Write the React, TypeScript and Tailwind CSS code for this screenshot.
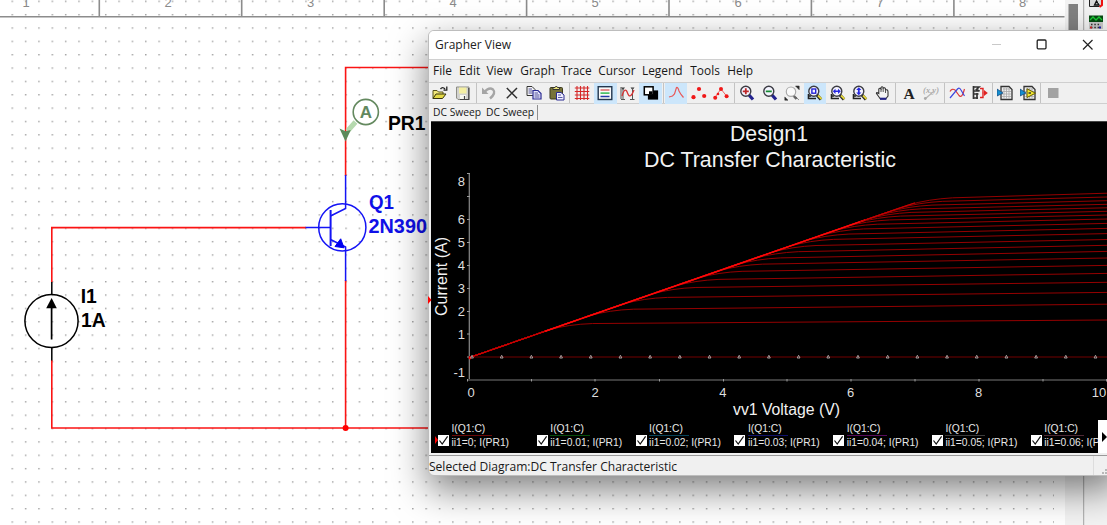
import React from "react";

type Pt = { left: number; right: number };

const CURVES: Pt[] = [
  { left: 321.7, right: 320 }, { left: 306.8, right: 304.2 }, { left: 295.2, right: 292.4 },
  { left: 285.4, right: 282.3 }, { left: 277.2, right: 273.4 }, { left: 269.4, right: 265.4 },
  { left: 262.4, right: 258 }, { left: 256.3, right: 251.4 }, { left: 250.4, right: 245.3 },
  { left: 244.6, right: 239.5 }, { left: 238.8, right: 233.6 }, { left: 233.8, right: 228.4 },
  { left: 229, right: 223.4 }, { left: 224.6, right: 219 }, { left: 220.6, right: 215 },
  { left: 217, right: 211.3 }, { left: 213.6, right: 207.8 }, { left: 210.3, right: 204.3 },
  { left: 206.9, right: 200.7 }, { left: 203.5, right: 197 }, { left: 200.6, right: 193.2 },
];

const envelope = (x: number) => 357.6 - 0.3475 * (x - 469);

function curvePath({ left, right }: Pt) {
  const s = (left - right) / 247;
  const flat = (x: number) => right + s * (1107 - x);
  const xe = (357.6 + 0.3475 * 469 - right - s * 1107) / (0.3475 - s);
  const a = xe - 18;
  const b = xe + 26;
  return `M469 357.6L${a} ${envelope(a)}Q${xe + 2} ${envelope(xe) + 0.6} ${b} ${flat(b)}L1107 ${right}`;
}

function Schematic() {
  return (
    <svg className="absolute inset-0" width="1107" height="525" fontFamily="Liberation Sans, Arial, sans-serif">
      <defs>
        <pattern id="dots" x="11.5" y="0.6" width="13.352" height="13.352" patternUnits="userSpaceOnUse">
          <rect width="1.5" height="1.4" fill="#a2a2a2" />
        </pattern>
      </defs>
      <rect x="11" width="1043" height="525" fill="url(#dots)" />
      <g stroke="#8c8c8c" strokeWidth="1.6">
        <path d="M0 16.8H1064.5" />
        <path d="M99.3 0V16M241.7 0V16M384.2 0V16M526.6 0V16M669 0V16M811.4 0V16M953.9 0V16" />
      </g>
      <g fill="#8a8a8a" fontSize="13" textAnchor="middle">
        {[26, 168, 310.5, 453, 595, 738, 880, 1022.5].map((x, i) => (
          <text key={x} x={x} y="6.6">{i + 1}</text>
        ))}
      </g>
      <rect x="1065" width="42" height="525" fill="#f3f3f3" />
      <rect x="1068.5" y="4" width="9.5" height="30" fill="#808080" />
      <path d="M1083.7 0V525" stroke="#a5a5a5" />
      <g>
        <rect x="1089" y="-6" width="14" height="12.5" fill="#d9d9d9" />
        <path d="M1089.5 0V6.5H1099" stroke="#222" fill="none" />
        <path d="M1094.5 5L1096.5 1L1099 5ZM1096 2.5H1098" stroke="#111" fill="none" strokeWidth="1.3" />
        <path d="M1102 0V5L1099.5 7" stroke="#e11" strokeWidth="2" fill="none" />
        <rect x="1089" y="15.5" width="14" height="6.5" fill="#064b12" />
        <path d="M1090 20L1093 17L1096 20L1099 17L1102 20" stroke="#1dcc36" fill="none" strokeWidth="1.3" />
        <rect x="1089" y="22" width="14" height="7" fill="#c9c9c9" />
        <path d="M1091 24.5H1101M1091 27.5H1101" stroke="#333" strokeDasharray="1.5 1.8" strokeWidth="1.6" />
        <path d="M1090 27.5H1092" stroke="#c22" strokeWidth="2" />
        <path d="M1099 27.5H1101" stroke="#22a" strokeWidth="2" />
      </g>
      <g stroke="#fb1414" strokeWidth="1.6" fill="none">
        <path d="M430 67.5H345.6V176" />
        <path d="M306 227.6H51.8V282" />
        <path d="M51.8 360V428H430M345.6 280V428" />
      </g>
      <circle cx="345.6" cy="428" r="3" fill="#f00" />
      <g stroke="#000" strokeWidth="1.5" fill="none">
        <path d="M51.8 282V294.5M51.8 347.5V360.5" />
        <circle cx="51.5" cy="321" r="26.6" />
        <path d="M51.6 304V339.5" strokeWidth="1.7" />
        <path d="M51.6 298L56.8 308.3H46.2Z" fill="#000" stroke="none" />
      </g>
      <g stroke="#1414f5" strokeWidth="1.5" fill="none">
        <circle cx="342.3" cy="227.4" r="23.6" />
        <path d="M305.5 227.6H330.5M345.6 175V208.5L330.5 216M330.5 239.5L345.6 247V281" />
        <path d="M330.6 210V246" strokeWidth="2" />
        <path d="M340.7 238.8L344 247.8L335 246.5Z" fill="#0000f0" stroke="#0000f0" strokeWidth="1" />
      </g>
      <path d="M355.5 122L347.5 131" stroke="#b5d9ae" strokeWidth="5" />
      <circle cx="365.8" cy="112" r="12.6" fill="#fff" stroke="#64895f" strokeWidth="1.6" />
      <path d="M339.5 128.5L345.6 131.2L350.8 130L345.5 141.5Z" fill="#5d8a5b" />
      <text x="365.8" y="118" fontSize="17" fontWeight="bold" textAnchor="middle" fill="#62885e">A</text>
      <g fontWeight="bold" fontSize="19.3">
        <text x="388" y="129.6">PR1</text>
        <text x="80.7" y="302.8">I1</text>
        <text x="81" y="326.9">1A</text>
        <text x="369" y="209.2" fill="#1010e8" textLength="25" lengthAdjust="spacingAndGlyphs">Q1</text>
        <text x="368.5" y="233.2" fill="#1010e8" textLength="58.5" lengthAdjust="spacingAndGlyphs">2N390</text>
      </g>
    </svg>
  );
}

function Plot() {
  return (
    <svg className="block" width="676" height="297" viewBox="431 122 676 297" fontFamily="Liberation Sans, Arial, sans-serif">
      <g fill="#f2f2f2">
        <text x="730" y="141.4" fontSize="21.8" textLength="78" lengthAdjust="spacingAndGlyphs">Design1</text>
        <text x="644" y="167" fontSize="21.8" textLength="252" lengthAdjust="spacingAndGlyphs">DC Transfer Characteristic</text>
        <text x="733" y="415.2" fontSize="16" textLength="107" lengthAdjust="spacingAndGlyphs">vv1 Voltage (V)</text>
        <text x="0" y="0" fontSize="16" textLength="79" lengthAdjust="spacingAndGlyphs" transform="translate(446.8 316) rotate(-90)">Current (A)</text>
      </g>
      <g fill="#dedede" fontSize="13" textAnchor="middle">
        {[0, 2, 4, 6, 8].map((v) => (
          <text key={v} x={v ? 467.3 + v * 63.9 : 471} y="396.6">{v}</text>
        ))}
        <text x="1099" y="396.6">10</text>
      </g>
      <g fill="#dedede" fontSize="13" textAnchor="end">
        <text x="465" y="186.4">8</text>
        {[6, 5, 4, 3, 2, 1].map((v) => (
          <text key={v} x="465" y={361.8 - v * 22.9}>{v}</text>
        ))}
        <text x="465" y="377.4">-1</text>
      </g>
      <path d="M469.3 173V380" stroke="#8a8a8a" strokeWidth="1.2" />
      <path d="M467 380H1107" stroke="#3c3c3c" strokeWidth="2" />
      <path
        d="M467 173.5H470M467 196.5H470M467 219.5H470M467 242.5H470M467 265.5H470M467 288.5H470M467 311.5H470M467 334H470M467 357H470M467.5 379V381.5M531.5 379V381.5M595 379V381.5M659.5 379V381.5M723.5 379V381.5M787 379V381.5M851 379V381.5M915 379V381.5M979 379V381.5M1043 379V381.5M1106.5 379V381.5"
        stroke="#999" strokeWidth="1"
      />
      <path d="M469 357H1107" stroke="#4c0000" strokeWidth="1.6" />
      <g stroke="#9c0000" strokeWidth="0.95" fill="none">
        {CURVES.map((c) => <path key={c.right} d={curvePath(c)} />)}
      </g>
      <path d="M469 357.8L560 326.2" stroke="#d00000" strokeWidth="1.1" />
      <path d="M545 331.2L865 220" stroke="#ff0808" strokeWidth="1.5" />
      <path d="M860 221.8L915 202.8" stroke="#c80000" strokeWidth="1.2" />
      <circle cx="470" cy="358" r="1.4" fill="#f00" />
      <g fill="#200" stroke="#b5aaaa" strokeWidth="0.9">
        {Array.from({ length: 22 }, (_, i) => 472 + i * 29.69).map((x) => (
          <path key={x} d={`M${x} 355.3L${x + 1.4} 358H${x - 1.4}Z`} />
        ))}
      </g>
    </svg>
  );
}

const Magnifier = ({ children, boxed }: { children?: React.ReactNode; boxed?: boolean }) => (
  <>
    {boxed && <path d="M1.5 9V13.5H9M2 11H4" stroke="#222" strokeWidth="1.6" fill="none" />}
    <path d="M10 10L14 14.5" stroke={boxed ? "#222" : "#23238e"} strokeWidth="3.2" />
    {boxed && <path d="M11 10.5L14.5 14" stroke="#e0d33a" strokeWidth="1.8" />}
    <circle cx="6.8" cy="6.3" r="5" fill="#f4f4ff" stroke="#3c3c44" strokeWidth="1.4" />
    {children}
  </>
);

const G = ({ children }: { children: React.ReactNode }) => (
  <svg width="16" height="16" viewBox="0 0 16 16" fill="none" fontFamily="Liberation Serif, serif">{children}</svg>
);

const Doc = () => (
  <>
    <path d="M4 1.5H12L15 4.5V14.5H4Z" fill="#eee" stroke="#333" strokeWidth="1.3" />
    <path d="M6 4H13M5 6.5H14M5 9H14M5 11.5H14M7 3V14M9.5 3V14M12 3V14" stroke="#aaa" strokeWidth=".8" />
    <path d="M0 4L6 8L0 11Z" fill="#1590d0" stroke="#174a80" strokeWidth=".8" />
  </>
);

const ICONS: Record<string, React.ReactNode> = {
  open: <><path d="M1 13.5V5.5H5L6.5 7H11V9" fill="#f1e77b" stroke="#56521b" /><path d="M1 13.5L4 9H14L10.5 13.5Z" fill="#e4da45" stroke="#35330e" /><path d="M8.5 4Q10.5 1.2 13 4M14.8 1.5V5.2H11.5" stroke="#222" strokeWidth="1.3" /></>,
  save: <><path d="M1.5 2H14V14.5H3L1.5 13Z" fill="#d2d2cf" stroke="#8d8d85" /><rect x="4" y="2.5" width="7.5" height="6" fill="#f4efa2" /><rect x="5" y="10" width="6" height="4.3" fill="#f8f8ef" /><path d="M9.5 11V14M13.8 3V14.5H5" stroke="#444" strokeWidth="1.2" /></>,
  undo: <><path d="M3.5 7Q8 1.8 12 4.5Q15.5 8 9 13.5" stroke="#a5a5a5" strokeWidth="2.4" /><path d="M1 2.5V9H7.5Z" fill="#a5a5a5" /></>,
  cut: <path d="M2.8 3L13 13.2M13 3L2.8 13.2" stroke="#303030" strokeWidth="1.5" />,
  copy: <><path d="M1 1.5H6L9 4.5V10.5H1Z" fill="#f5f5f5" stroke="#333" /><path d="M7 5.5H12L15 8.5V14H7Z" fill="#e8e8ff" stroke="#2a2a91" strokeWidth="1.2" /><path d="M2.5 4H6M2.5 6H6.5M2.5 8H6.5M8.5 8H12M8.5 10H13.5M8.5 12H13.5" stroke="#555599" /></>,
  paste: <><rect x="1" y="2.5" width="12.5" height="11.5" rx="1" fill="#77733a" stroke="#3b391e" /><path d="M4 4.5V2.5H6L7.3 1L8.6 2.5H10.5V4.5Z" fill="#eae27b" stroke="#333" /><path d="M7.5 7.5H12L15 10V15H7.5Z" fill="#f0f0ff" stroke="#2a2a91" /><path d="M9 10H12M9 12.5H13.5" stroke="#5555a5" /></>,
  grid: <path d="M3 1V15M6.5 1V15M10 1V15M13.5 1V15M.8 3H15.3M.8 6.5H15.3M.8 10H15.3M.8 13.5H15.3" stroke="#d52828" strokeWidth="1.1" />,
  legend: <><rect x="1.2" y="1.7" width="13.6" height="12.8" fill="#fafafa" stroke="#22364d" strokeWidth="1.4" /><path d="M3.5 5H12.5" stroke="#dd6868" strokeWidth="1.6" /><path d="M3.5 8.2H12.5" stroke="#4fc16b" strokeWidth="1.8" /><path d="M3.5 11.5H12.5" stroke="#2438a8" strokeWidth="1.6" /></>,
  cursor: <><path d="M1 2.5H5L3 5ZM10.5 2.5H14.5L12.5 5Z" fill="#333" /><path d="M3 3V15M12.5 3V15M1 14.5H5M10 14.5H14.5M1 2V14" stroke="#555" /><path d="M2 11Q5 1 7.5 8Q10 15 14 5" stroke="#d63333" strokeWidth="1.3" /></>,
  invert: <><rect x="5.5" y="6" width="9" height="8" fill="#000" stroke="#000" strokeWidth="1.2" /><rect x="1.3" y="1.8" width="8.8" height="8" fill="#fff" stroke="#000" strokeWidth="1.5" /><rect x="6" y="6.3" width="3.4" height="2.7" fill="#000" /></>,
  line: <path d="M1 12L4.5 11L6.5 9L8.5 2.5Q10 2 11 6L13 9.5L15.5 12.5" stroke="#e85a5a" strokeWidth="1.2" />,
  points: <g fill="#f01818"><circle cx="2.5" cy="12.2" r="2.1" /><circle cx="8" cy="4" r="2.1" /><circle cx="13.2" cy="11" r="2.1" /></g>,
  both: <><path d="M2 12.5L5 8L8 4L13.5 11" stroke="#f26262" /><g fill="#f01818"><circle cx="2.2" cy="12.8" r="2" /><circle cx="8" cy="4" r="2" /><circle cx="13.6" cy="11.2" r="2" /><circle cx="5" cy="9" r="1.3" /></g></>,
  zin: <Magnifier><path d="M3.8 6.3H9.8M6.8 3.3V9.3" stroke="#bd2929" strokeWidth="1.8" /></Magnifier>,
  zout: <Magnifier><path d="M3.8 6.3H9.8" stroke="#168b32" strokeWidth="1.8" /></Magnifier>,
  fit: <><path d="M9 10L12.5 14" stroke="#666" strokeWidth="2.5" /><circle cx="7" cy="6.7" r="4.7" fill="#fafafa" stroke="#aaa" strokeWidth="1.2" /><path d="M11.5 1H15.2V4.7ZM.8 12V15.2H4ZM12.3 12.5L15 15" fill="#2b2b2b" stroke="#2b2b2b" strokeWidth=".5" /></>,
  zarea: <Magnifier boxed><rect x="4.9" y="4" width="3.8" height="4.2" stroke="#2525d5" strokeWidth="1.4" /></Magnifier>,
  zhor: <Magnifier boxed><path d="M2.8 6.3L5.5 3.7V5.5H8V3.7L10.8 6.3L8 8.9V7.1H5.5V8.9Z" fill="#2828e0" /></Magnifier>,
  zver: <Magnifier boxed><path d="M6.8 2.3L9.4 5H7.7V7.5H9.4L6.8 10.3L4.2 7.5H5.9V5H4.2Z" fill="#2828e0" /></Magnifier>,
  hand: <><path d="M4 12L1.5 8.5Q1 6.8 3.8 8.5V4Q4.8 2.5 6 4V2.5Q7 1 8.2 2.5V3.2Q9.8 2 10.5 4V5Q13 4 13 7V11L11 13.5H5Z" fill="#f4f4f4" stroke="#333" strokeWidth="1.1" /><path d="M6 4V7M8.2 3V7M10.5 5V8" stroke="#555" /><rect x="5" y="12.7" width="6.4" height="2.2" fill="#242487" /></>,
  text: <text x="2.5" y="13.5" fontSize="15.5" fontWeight="bold" fill="#222">A</text>,
  coord: <><text x="0" y="8" fontSize="8.5" fontStyle="italic" fontWeight="bold" fill="#aaa" textLength="16">(x,y)</text><path d="M2 14L10 7" stroke="#b5b5b5" strokeWidth="1.2" /><circle cx="2.3" cy="13.5" r="1.4" fill="#aaa" /></>,
  traces: <><path d="M1 6.5Q3 3 6 5L10 10.5Q13 14 15.5 4" stroke="#dd3a3a" strokeWidth="1.2" /><path d="M1 13L8.5 4Q10.5 2 12 5L15.5 11" stroke="#3d48df" strokeWidth="1.2" /></>,
  logic: <><path d="M1.5 1V14M1 2H7L4.5 4.5L7.5 6H1M1 9H6.5M1 13H6M5 8V14" stroke="#333" strokeWidth="1.7" /><path d="M8 3.5H11V7M8 12.5H11V9M10 8H13" stroke="#e02222" strokeWidth="1.4" /><path d="M12 5L15.8 8L12 11Z" fill="#e02222" /></>,
  sheet: <Doc />,
  export: <><Doc /><path d="M7 3.8L15.5 8.2L7 12.5Z" fill="#f3e932" stroke="#665d00" /><path d="M8.5 8H11" stroke="#333" strokeWidth="1.5" /></>,
  stop: <rect x="3" y="3" width="10.5" height="10" fill="#a2a2a2" />,
};

const TOOLS = "save | undo cut copy paste | grid legend* cursor invert* | line* points both | zin zout fit zarea* zhor zver hand | text coord | traces logic | sheet export | stop".split(" ");

function Toolbar() {
  return (
    <div className="flex h-[22px] shrink-0 items-center border-y border-[#cfcfcf] bg-[#f0f0f0]">
      <div className="flex w-[22px] shrink-0 justify-center"><G>{ICONS.open}</G></div>
      <div className="w-px shrink-0" />
      {TOOLS.map((t, i) =>
        t === "|" ? (
          <div key={i} className="flex h-[20px] w-[2.85px] shrink-0 justify-center"><div className="w-px bg-[#c3c3c3]" /></div>
        ) : (
          <div key={i} className={t.endsWith("*") ? "flex h-[21px] w-[22.7px] shrink-0 items-center justify-center bg-[#cce6fb]" : "flex h-[21px] w-[22.7px] shrink-0 items-center justify-center"}>
            <G>{ICONS[t.replace("*", "")]}</G>
          </div>
        )
      )}
    </div>
  );
}

const MENU: [string, string][] = [
  ["File", "w-[26px]"], ["Edit", "w-[27.5px]"], ["View", "w-[33.8px]"], ["Graph", "w-[41px]"], ["Trace", "w-[37px]"],
  ["Cursor", "w-[43.7px]"], ["Legend", "w-[48.3px]"], ["Tools", "w-[37px]"], ["Help", "w-[30px]"],
];

const LEGEND: [string, string][] = [
  ["0", "bg-[#6b0808]"], ["0.01", "bg-[#064d0c]"], ["0.02", "bg-[#084459]"], ["0.03", "bg-[#11116b]"],
  ["0.04", "bg-[#570b5b]"], ["0.05", "bg-[#3b3b3b]"], ["0.06", "bg-[#4d2834]"],
];

function Legend() {
  return (
    <div className="relative flex h-[34px] overflow-hidden font-['Liberation_Sans',Arial,sans-serif] text-[10.3px] text-[#e8e8e8]">
      <svg className="absolute left-[4px] top-[16px]" width="4" height="10"><path d="M0 1L3 5L0 9Z" fill="#f00" /></svg>
      {LEGEND.map(([v, c]) => (
        <div key={v} className="flex w-[98.8px] shrink-0 gap-[2.5px] pl-[7px]">
          <svg className="mt-[16px] shrink-0" width="11" height="11" viewBox="0 0 11 11">
            <rect width="11" height="11" fill="#fff" /><path d="M1.5 5.5L4.2 9L9.6 1.4" stroke="#111" strokeWidth="1.2" fill="none" />
          </svg>
          <div className="flex flex-col items-start whitespace-nowrap pt-[4px]">
            <div className="h-[12px] leading-[12px]">I(Q1:C)</div>
            <div className={`h-px w-[40px] ${c}`} />
            <div className="h-[14px] leading-[14px]">ii1={v}; I(PR1)</div>
          </div>
        </div>
      ))}
      <div className="absolute right-0 top-[1px] flex h-[33px] w-[9px] items-center bg-white">
        <svg width="9" height="12"><path d="M4 1L9 6L4 11Z" fill="#000" /></svg>
      </div>
    </div>
  );
}

function GrapherWindow() {
  return (
    <div className="absolute left-[428px] top-[30px] flex h-[446px] w-[690px] flex-col overflow-hidden rounded-[6px] border border-[#bdbdbd] bg-[#f0f0f0] font-['Open_Sans','Noto_Sans',sans-serif] text-[#181818] shadow-[0_14px_36px_rgba(0,0,0,0.5)]">
      <div className="flex h-[28px] shrink-0 items-center bg-white pl-[6px] text-[12px]">
        <span className="w-[556px] text-[#222]">Grapher View</span>
        <svg width="112" height="20" viewBox="0 0 112 20" fill="none">
          <path d="M1 9.5H10" stroke="#c9c9c9" />
          <rect x="46.2" y="5" width="8.8" height="8.8" rx="1" stroke="#222" strokeWidth="1.3" />
          <path d="M92 5L101.5 14.5M101.5 5L92 14.5" stroke="#222" strokeWidth="1.2" />
        </svg>
      </div>
      <div className="flex h-[23px] shrink-0 items-center border-t border-[#d0d0d0] pl-[4px] text-[11.9px]">
        {MENU.map(([m, w]) => <span key={m} className={`${w} shrink-0 whitespace-nowrap`}>{m}</span>)}
      </div>
      <Toolbar />
      <div className="flex h-[17px] shrink-0 items-center whitespace-nowrap pl-[4px] text-[10.3px]">
        <span className="w-[51px] leading-[15px]">DC Sweep</span>
        <span className="mb-px h-[15px] w-[54px] border-r border-[#8f8f8f] pl-[2px] leading-[14px]">DC Sweep</span>
      </div>
      <div className="ml-[2px] w-[676px] shrink-0 border-t border-[#444] bg-black">
        <Plot />
        <Legend />
      </div>
      <div className="mt-[2px] flex w-[678px] flex-1 items-center justify-between border-t border-[#999] text-[12.05px]">
        <span className="pt-[2px] leading-[16px]">Selected Diagram:DC Transfer Characteristic</span>
        <svg className="border-l border-[#ddd]" width="14" height="20"><path d="M8 17H10M11 17H13M11 14H13" stroke="#b8b8b8" strokeWidth="2" /></svg>
      </div>
    </div>
  );
}

export default function App() {
  return (
    <div className="relative h-[525px] w-[1107px] overflow-hidden bg-white">
      <Schematic />
      <GrapherWindow />
      <svg className="absolute left-[428px] top-[295px]" width="4" height="10"><path d="M0 1L3.5 5L0 9Z" fill="#f00" /></svg>
    </div>
  );
}
